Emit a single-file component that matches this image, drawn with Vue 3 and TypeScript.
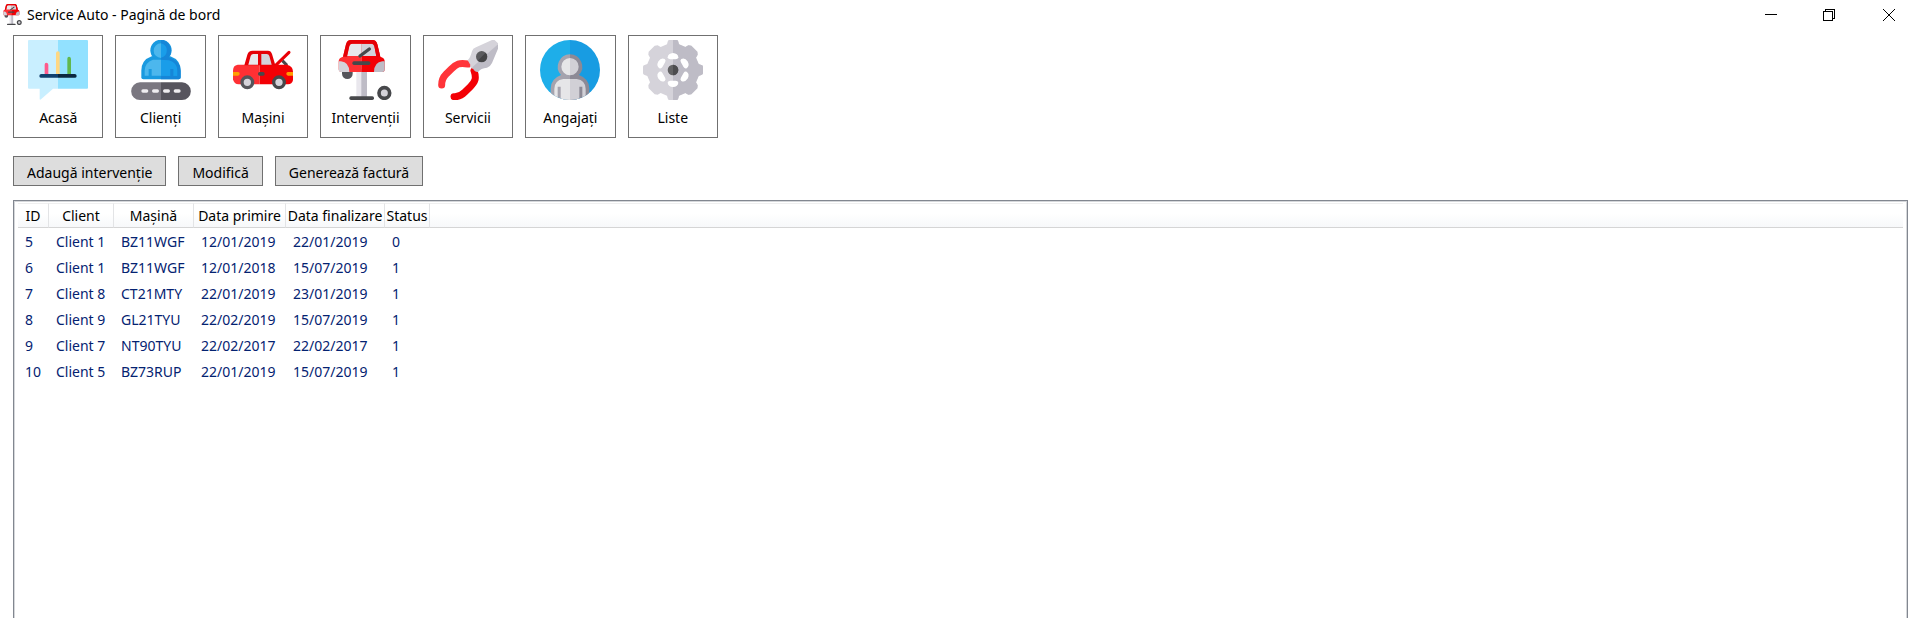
<script setup lang="ts">
interface NavItem {
  id: string
  label: string
}

interface Intervention {
  id: number
  client: string
  car: string
  received: string
  finished: string
  status: number
}

const navItems: NavItem[] = [
  { id: 'home', label: 'Acasă' },
  { id: 'clients', label: 'Clienți' },
  { id: 'cars', label: 'Mașini' },
  { id: 'jobs', label: 'Intervenții' },
  { id: 'services', label: 'Servicii' },
  { id: 'staff', label: 'Angajați' },
  { id: 'lists', label: 'Liste' },
]

const actions: string[] = ['Adaugă intervenție', 'Modifică', 'Generează factură']

const columns: string[] = ['ID', 'Client', 'Mașină', 'Data primire', 'Data finalizare', 'Status']

const rows: Intervention[] = [
  { id: 5, client: 'Client 1', car: 'BZ11WGF', received: '12/01/2019', finished: '22/01/2019', status: 0 },
  { id: 6, client: 'Client 1', car: 'BZ11WGF', received: '12/01/2018', finished: '15/07/2019', status: 1 },
  { id: 7, client: 'Client 8', car: 'CT21MTY', received: '22/01/2019', finished: '23/01/2019', status: 1 },
  { id: 8, client: 'Client 9', car: 'GL21TYU', received: '22/02/2019', finished: '15/07/2019', status: 1 },
  { id: 9, client: 'Client 7', car: 'NT90TYU', received: '22/02/2017', finished: '22/02/2017', status: 1 },
  { id: 10, client: 'Client 5', car: 'BZ73RUP', received: '22/01/2019', finished: '15/07/2019', status: 1 },
]
</script>

<template>
  <div class="window">
    <svg class="defs" width="0" height="0" aria-hidden="true">
      <defs>
        <clipPath id="right-half"><rect x="90" y="0" width="90" height="180" /></clipPath>
        <clipPath id="disc"><circle cx="90" cy="90" r="90" /></clipPath>
        <symbol id="car-lift" viewBox="0 0 180 180">
          <rect x="64" y="88" width="17" height="88" fill="#e9e7ed" />
          <rect x="79" y="88" width="17" height="88" fill="#bebcc6" />
          <rect x="43" y="169" width="74" height="11" rx="5" fill="#47484b" />
          <circle cx="148" cy="159" r="16" fill="#d5d3da" stroke="#47484b" stroke-width="11" />
          <path d="M21 88H53V101A16 16 0 0 1 21 101Z" fill="#55555b" />
          <path d="M24 50L33 13Q36 0 48 0H79V96H17Q11 96 11 88V63Q12 53 24 50Z" fill="#ff3034" />
          <path d="M79 0H112Q124 0 127 13L136 50Q148 53 149 63V88Q149 96 142 96H79Z" fill="#f30005" />
          <path d="M36 48L43 18Q45 11 52 11H79V48Z" fill="#e7e7eb" />
          <path d="M79 11H109Q116 11 118 18L124 48H79Z" fill="#d3d2d9" />
          <path d="M33 13Q36 0 48 0H112Q124 0 127 13L136 50H124L118 18Q116 11 109 11H52Q45 11 43 18L36 50H24Z" fill="#e50006" />
          <path d="M75 48L103 27" fill="none" stroke="#47484b" stroke-width="10" stroke-linecap="round" />
          <rect x="52" y="64" width="54" height="11" rx="5" fill="#47484b" />
          <path d="M11 64H18Q42 66 43 96H18Q11 96 11 88Z" fill="#d5d3da" />
          <path d="M149 64H142Q118 66 117 96H142Q149 96 149 88Z" fill="#bebcc6" />
        </symbol>
      </defs>
    </svg>

    <header class="titlebar">
      <svg class="app-icon" viewBox="0 0 180 180" aria-hidden="true"><use href="#car-lift" /></svg>
      <h1 class="title">Service Auto - Pagină de bord</h1>
      <div class="window-controls">
        <button type="button" class="control" aria-label="Minimizează">
          <svg viewBox="0 0 12 12" shape-rendering="crispEdges"><path d="M0 5.5H12" /></svg>
        </button>
        <button type="button" class="control" aria-label="Restaurează">
          <svg viewBox="0 0 12 12" shape-rendering="crispEdges"><path d="M.5 2.5H9.5V11.5H.5ZM2.5 2.5V.5H11.5V9.5H9.5" /></svg>
        </button>
        <button type="button" class="control" aria-label="Închide">
          <svg viewBox="0 0 12 12"><path d="M0 0L12 12M12 0L0 12" /></svg>
        </button>
      </div>
    </header>

    <nav class="nav">
      <button v-for="item in navItems" :key="item.id" type="button" class="tile">
        <svg class="tile-icon" viewBox="0 0 180 180" aria-hidden="true">
          <g v-if="item.id === 'home'">
            <path d="M3 0H90V146H75L39 178Q35 181 35 176V146H3Q0 146 0 143V3Q0 0 3 0Z" fill="#c9efff" />
            <path d="M90 0H177Q180 0 180 3V143Q180 146 177 146H90Z" fill="#92e1ff" />
            <path d="M50 106V74Q50 68 55 68T61 74V106Z" fill="#ff5a8c" />
            <path d="M84 106V40Q84 34 90 34T95 40V106Z" fill="#ffd782" />
            <path d="M118 106V56Q118 50 123 50T129 56V106Z" fill="#61b84d" />
            <path d="M90 102H40Q34 102 34 108T40 113H90Z" fill="#11406e" />
            <path d="M90 102H140Q146 102 146 108T140 113H90Z" fill="#0b2840" />
          </g>

          <g v-else-if="item.id === 'clients'">
            <path d="M62 49H118Q149 60 149 92V112Q149 118 143 118H37Q31 118 31 112V92Q31 60 62 49Z" fill="#199ae0" />
            <circle cx="90" cy="31" r="32" fill="#199ae0" />
            <path d="M90 10A22 22 0 0 0 90 54ZM90 59H66Q41 68 41 92V107H53V87H62V107H90Z" fill="#4cb7ed" />
            <path d="M90 10A22 22 0 0 1 90 54ZM90 59H114Q139 68 139 92V107H127V87H118V107H90Z" fill="#199de9" />
            <path d="M90 0A32 32 0 0 1 113 52Q149 62 149 92V112Q149 118 143 118H90V108H118V87H127V108H139V92Q139 68 114 61L90 59V53A22 22 0 0 0 90 10Z" fill="#1686d8" />
            <path d="M90 127H27A26 26 0 0 0 27 180H90Z" fill="#7a7780" />
            <path d="M90 127H153A26 26 0 0 1 153 180H90Z" fill="#57555e" />
            <path d="M36 153H47M68 153H79M101 153H112M133 153H144" fill="none" stroke="#efedf0" stroke-width="10" stroke-linecap="round" />
          </g>

          <g v-else-if="item.id === 'cars'">
            <path d="M148 62L162 76" stroke="#47484b" stroke-width="9" />
            <path d="M128 76L168 37" stroke="#e90006" stroke-width="9" stroke-linecap="round" />
            <path d="M80 74H14Q0 76 0 92V118Q3 133 17 133H80Z" fill="#ff3034" />
            <path d="M80 74H162Q180 78 180 95V120Q177 133 165 133H80Z" fill="#f30005" />
            <path d="M34 76L43 44Q46 32 59 32H105Q114 32 117 42L127 76Z" fill="#e50006" />
            <path d="M46 74L53 48Q55 42 61 42H75V74Z" fill="#e7e7eb" />
            <path d="M85 42H101Q107 42 109 48L116 74H85Z" fill="#d3d2d9" />
            <path d="M0 96H15Q20 96 20 101T15 107H0Z" fill="#ff9d00" />
            <path d="M180 96H165Q160 96 160 101T165 107H180Z" fill="#ff9d00" />
            <rect x="75" y="96" width="20" height="11" rx="5" fill="#47484b" />
            <circle cx="43" cy="127" r="16" fill="#d5d3da" stroke="#55555b" stroke-width="10" />
            <circle cx="138" cy="127" r="16" fill="#d5d3da" stroke="#47484b" stroke-width="10" />
          </g>

          <use v-else-if="item.id === 'jobs'" href="#car-lift" />

          <g v-else-if="item.id === 'services'">
            <path d="M11 135C11 120 14 113 24 103L40 87C55 72 64 67 90 72" fill="none" stroke="#ff3439" stroke-width="21" stroke-linecap="round" />
            <path d="M48 170C62 171 70 167 80 157L97 140C112 125 116 115 108 92" fill="none" stroke="#f30005" stroke-width="21" stroke-linecap="round" />
            <path d="M89 61Q97 54 102 34Q104 25 114 22L162 0Q168-2 172 2L181 11L106 86Q94 84 97 74Z" fill="#d5d3da" />
            <path d="M181 11V24L162 69Q157 80 147 83Q128 85 121 95Q115 98 108 91L103 82Z" fill="#bebcc6" />
            <circle cx="131" cy="50" r="17" fill="#5b5b5e" />
            <path d="M143 38A17 17 0 0 1 119 62Z" fill="#444446" />
          </g>

          <g v-else-if="item.id === 'staff'" clip-path="url(#disc)">
            <path d="M0 0H90V180H0Z" fill="#1eaee9" />
            <path d="M90 0H180V180H90Z" fill="#189ce2" />
            <path d="M90 43A37 37 0 0 0 63 105Q33 116 32 145V180H90Z" fill="#a5a3ae" />
            <path d="M90 43A37 37 0 0 1 117 105Q147 116 148 145V180H90Z" fill="#8c8995" />
            <path d="M90 54A26 26 0 0 0 90 106ZM90 117H70Q43 121 43 147V180H53V140H62V180H90Z" fill="#e6e6e8" />
            <path d="M90 54A26 26 0 0 1 90 106ZM90 117H110Q137 121 137 147V180H127V140H118V180H90Z" fill="#d1d0d6" />
          </g>

          <g v-else>
            <path
              d="M78 0H102Q105 0 106 5L108 13L127 21L136 16L145 17L163 35L164 44L159 53L167 72L175 75Q180 76 180 80V100Q180 104 175 105L167 108L159 127L164 136L163 145L145 163L136 164L127 159L108 167L106 175Q105 180 102 180H78Q75 180 74 175L72 167L53 159L44 164L35 163L17 145L16 136L21 127L13 108L5 105Q0 104 0 100V80Q0 76 5 75L13 72L21 53L16 44L17 35L35 17L44 16L53 21L72 13L74 5Q75 0 78 0Z"
              fill="#d5d3da"
            />
            <path
              d="M90 0H102Q105 0 106 5L108 13L127 21L136 16L145 17L163 35L164 44L159 53L167 72L175 75Q180 76 180 80V100Q180 104 175 105L167 108L159 127L164 136L163 145L145 163L136 164L127 159L108 167L106 175Q105 180 102 180H90Z"
              fill="#bebcc6"
            />
            <path
              v-for="turn in 6"
              :key="turn"
              d="M74 52Q75 40 90 39Q105 40 106 52Q105 58 98 58H82Q75 58 74 52Z"
              fill="#fff"
              :transform="`rotate(${turn * 60} 90 90)`"
            />
            <circle cx="90" cy="90" r="16" fill="#626264" />
            <circle cx="90" cy="90" r="16" fill="#4c4c4f" clip-path="url(#right-half)" />
          </g>
        </svg>
        <span>{{ item.label }}</span>
      </button>
    </nav>

    <div class="actions">
      <button v-for="action in actions" :key="action" type="button" class="action">{{ action }}</button>
    </div>

    <main class="list">
      <table>
        <colgroup>
          <col class="col-id" />
          <col class="col-client" />
          <col class="col-car" />
          <col class="col-received" />
          <col class="col-finished" />
          <col class="col-status" />
          <col />
        </colgroup>
        <thead>
          <tr>
            <th v-for="column in columns" :key="column" scope="col">{{ column }}</th>
            <td class="filler"></td>
          </tr>
        </thead>
        <tbody>
          <tr v-for="row in rows" :key="row.id">
            <td>{{ row.id }}</td>
            <td>{{ row.client }}</td>
            <td>{{ row.car }}</td>
            <td>{{ row.received }}</td>
            <td>{{ row.finished }}</td>
            <td>{{ row.status }}</td>
            <td></td>
          </tr>
        </tbody>
      </table>
    </main>
  </div>
</template>

<style>
body {
  margin: 0;
  background: #fff;
}
</style>

<style scoped>
.window {
  display: flex;
  flex-direction: column;
  height: 100vh;
  overflow: hidden;
  color: #000;
  font: 14px/20px "Noto Sans", "Open Sans", sans-serif;
}

.defs {
  position: absolute;
}

button {
  box-sizing: border-box;
  margin: 0;
  color: inherit;
  font: inherit;
}

.titlebar {
  display: flex;
  flex: none;
  align-items: center;
  height: 29px;
  padding-left: 2px;
}

.app-icon {
  width: 21px;
  height: 21px;
}

.title {
  flex: 1;
  margin: 0 0 0 4px;
  font-size: 14px;
  font-weight: 400;
}

.window-controls {
  display: flex;
  align-self: stretch;
}

.control {
  display: grid;
  place-items: center;
  width: 58px;
  padding: 0;
  border: 0;
  background: none;
}

.control:last-child {
  width: 62px;
}

.control svg {
  width: 12px;
  height: 12px;
  fill: none;
  stroke: #000;
}

.nav {
  display: grid;
  flex: none;
  grid-template-columns: repeat(7, 1fr);
  gap: 12px;
  width: 705px;
  margin: 6px 0 0 13px;
}

.tile {
  display: flex;
  flex-direction: column;
  align-items: center;
  gap: 8px;
  height: 103px;
  padding: 4px 0 0;
  border: 1px solid #707070;
  background: #fff;
}

.tile-icon {
  flex: none;
  width: 60px;
  height: 60px;
}

.actions {
  display: flex;
  flex: none;
  gap: 12px;
  margin: 18px 0 0 13px;
}

.action {
  height: 30px;
  padding: 4px 13px 0;
  border: 1px solid #707070;
  background: #ddd;
}

.list {
  flex: 1;
  margin: 14px 12px 0 13px;
  padding: 2px 4px 0;
  border: solid #828790;
  border-width: 1px 1px 0;
  box-shadow: inset 1px 1px #d5d7da, inset -1px 0 #d5d7da;
}

table {
  width: 100%;
  border-collapse: separate;
  border-spacing: 0;
  table-layout: fixed;
}

.col-id {
  width: 31px;
}

.col-client {
  width: 65px;
}

.col-car {
  width: 80px;
}

.col-received {
  width: 92px;
}

.col-finished {
  width: 99px;
}

.col-status {
  width: 45px;
}

th,
td {
  box-sizing: border-box;
  padding: 0;
  white-space: nowrap;
}

thead th,
thead .filler {
  height: 25px;
  padding-top: 1px;
  border-top: 1px solid #f0f0f0;
  border-bottom: 1px solid #d5d5d5;
  background: linear-gradient(#fff 40%, #f7f8fa);
  font-weight: 400;
  text-align: center;
}

thead th {
  border-right: 1px solid #e3e4e6;
}

tbody td {
  height: 26px;
  padding: 1px 0 0 7px;
  color: #042271;
}
</style>
